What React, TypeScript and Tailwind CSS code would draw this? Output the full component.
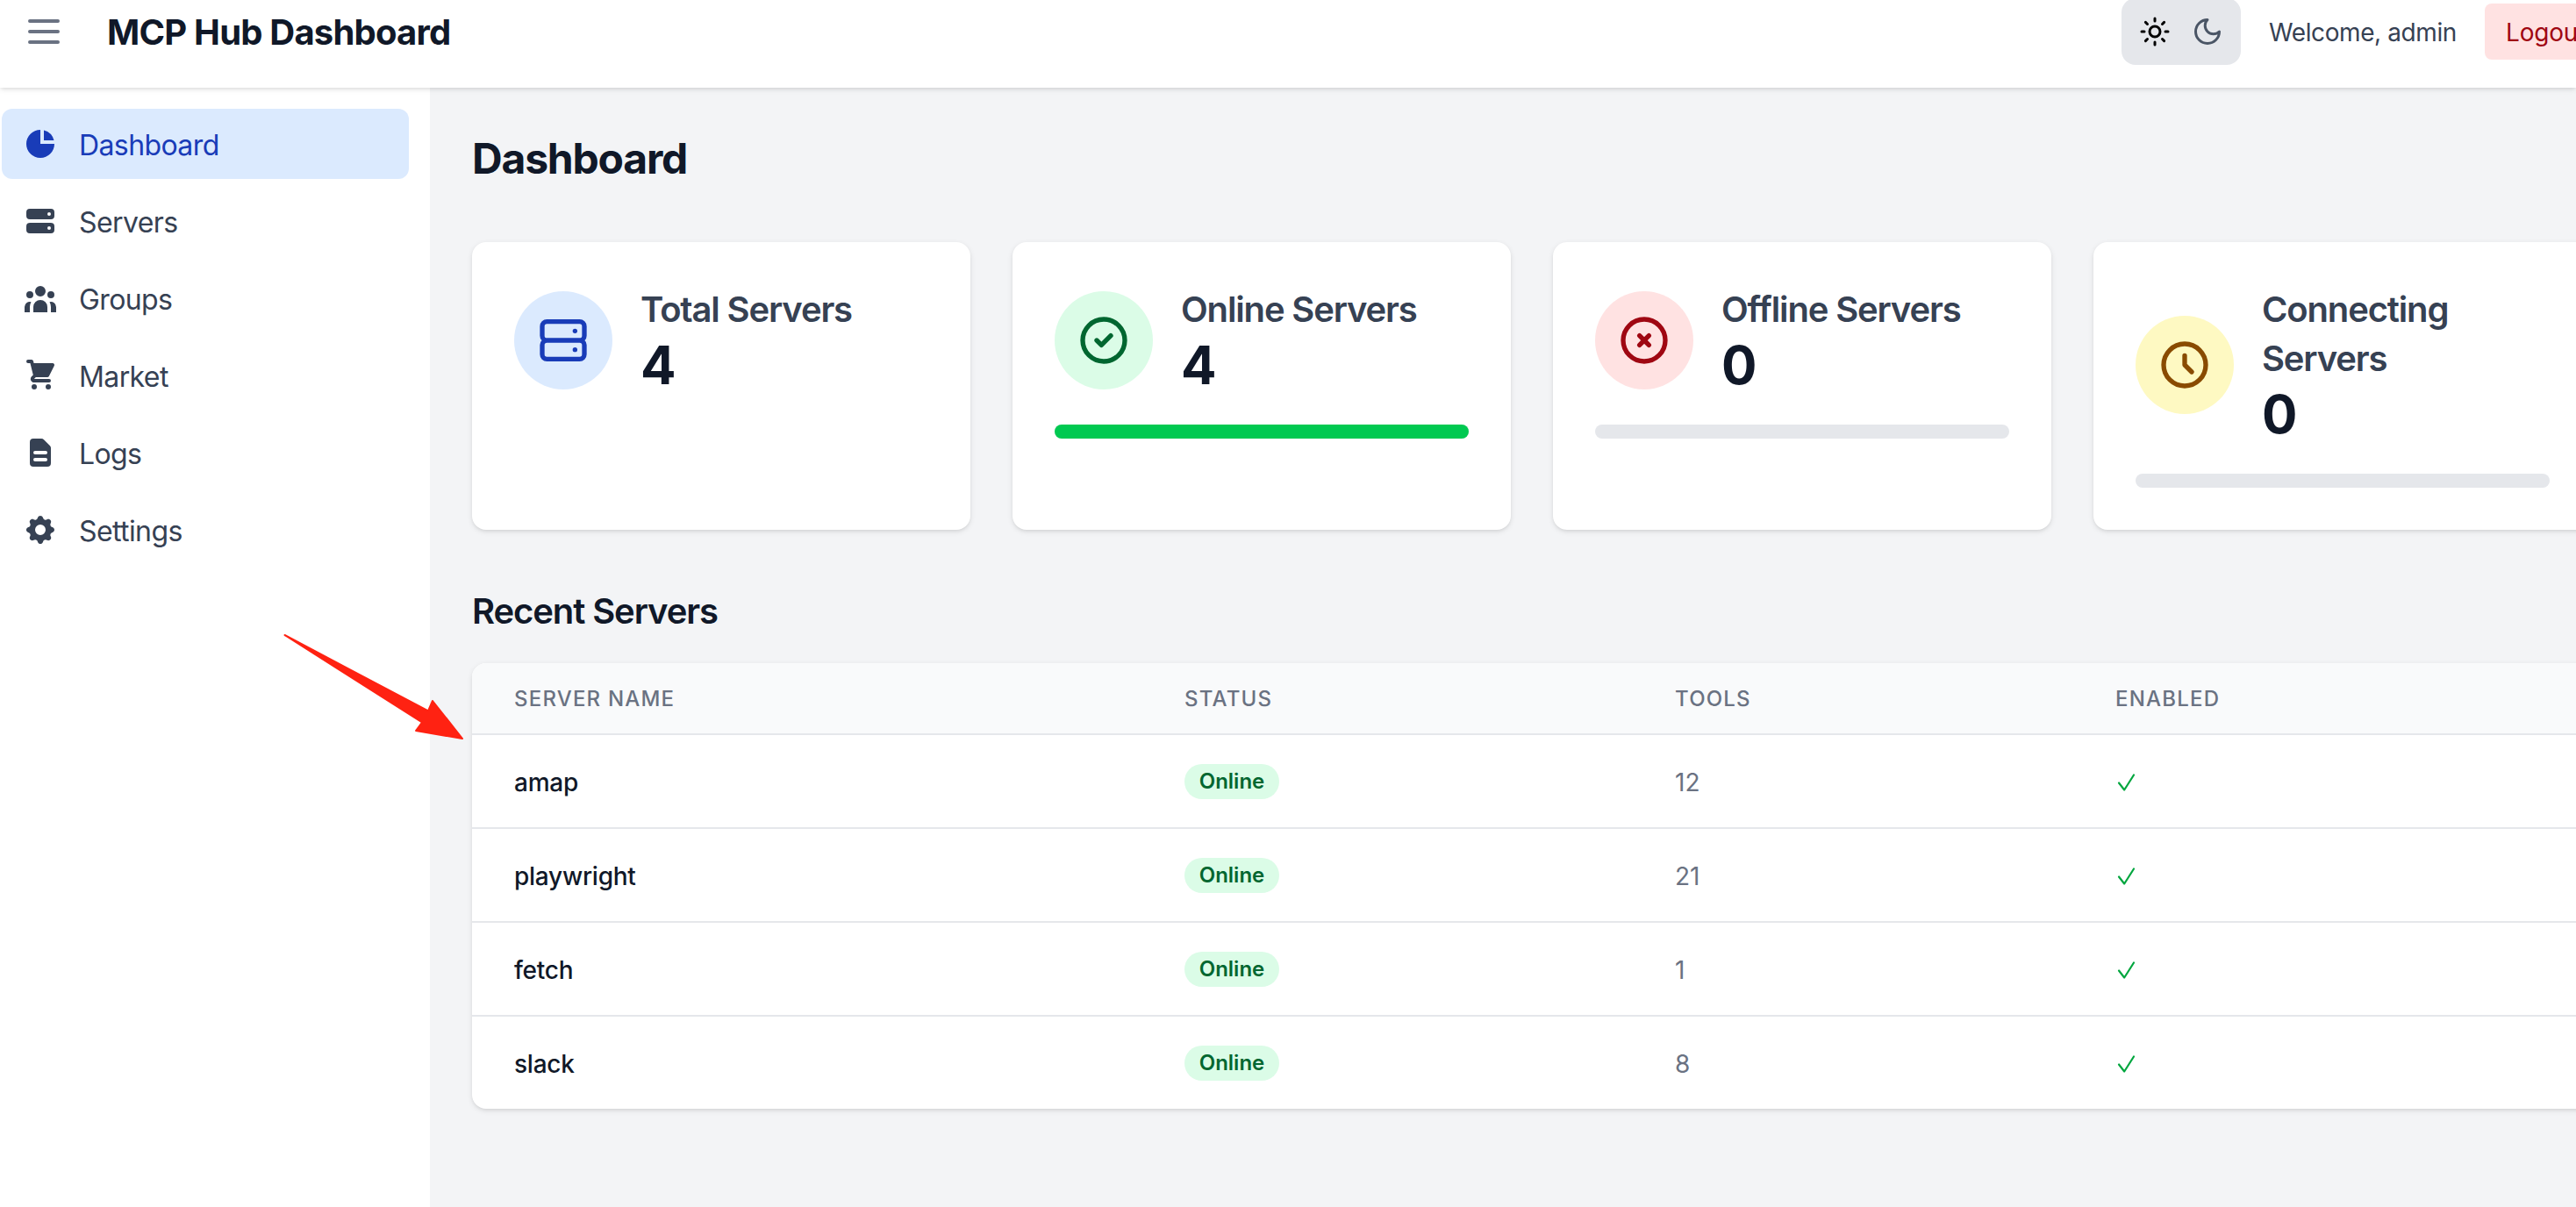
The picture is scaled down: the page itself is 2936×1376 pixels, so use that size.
import type { ReactNode } from "react";
import type { IconType } from "react-icons";
import {
  HiChartPie,
  HiServer,
  HiUserGroup,
  HiShoppingCart,
  HiDocumentText,
  HiCog,
  HiOutlineMenu,
  HiOutlineServer,
  HiOutlineCheckCircle,
  HiOutlineXCircle,
  HiOutlineClock,
} from "react-icons/hi";

interface NavItem {
  label: string;
  icon: IconType;
  active?: boolean;
}

interface Server {
  name: string;
  status: string;
  tools: number;
  enabled: boolean;
}

const navItems: NavItem[] = [
  { label: "Dashboard", icon: HiChartPie, active: true },
  { label: "Servers", icon: HiServer },
  { label: "Groups", icon: HiUserGroup },
  { label: "Market", icon: HiShoppingCart },
  { label: "Logs", icon: HiDocumentText },
  { label: "Settings", icon: HiCog },
];

const servers: Server[] = [
  { name: "amap", status: "Online", tools: 12, enabled: true },
  { name: "playwright", status: "Online", tools: 21, enabled: true },
  { name: "fetch", status: "Online", tools: 1, enabled: true },
  { name: "slack", status: "Online", tools: 8, enabled: true },
];

function SunIcon() {
  return (
    <svg
      viewBox="0 0 24 24"
      fill="none"
      stroke="currentColor"
      strokeWidth="2"
      strokeLinecap="round"
      strokeLinejoin="round"
      className="size-9"
    >
      <circle cx="12" cy="12" r="4" />
      <path d="M12 2v2M12 20v2M4.93 4.93l1.41 1.41M17.66 17.66l1.41 1.41M2 12h2M20 12h2M6.34 17.66l-1.41 1.41M19.07 4.93l-1.41 1.41" />
    </svg>
  );
}

function MoonIcon() {
  return (
    <svg
      viewBox="0 0 24 24"
      fill="none"
      stroke="currentColor"
      strokeWidth="2"
      strokeLinecap="round"
      strokeLinejoin="round"
      className="size-9"
    >
      <path d="M12 3a6 6 0 0 0 9 9 9 9 0 1 1-9-9Z" />
    </svg>
  );
}

function Header() {
  return (
    <header className="relative z-10 flex h-[100px] shrink-0 items-start justify-between bg-white shadow-[0_2px_6px_0_rgb(0_0_0/0.1),0_2px_4px_-2px_rgb(0_0_0/0.1)]">
      <div className="flex h-[72px] items-center pl-[26px]">
        <button type="button" className="text-gray-500">
          <HiOutlineMenu className="size-12" />
        </button>
        <h1 className="ml-12 pt-0.5 text-[40px] leading-[54px] font-bold tracking-[-0.8px] text-gray-900">
          MCP Hub Dashboard
        </h1>
      </div>

      {/* Logout runs past the right edge of the window */}
      <div className="-mt-0.5 flex h-[76px] w-[518px] shrink-0 items-center gap-8">
        <div className="flex shrink-0 rounded-2xl bg-gray-200 p-2">
          <button type="button" className="p-3 text-black">
            <SunIcon />
          </button>
          <button type="button" className="p-3 text-gray-600">
            <MoonIcon />
          </button>
        </div>
        <span className="w-[214px] shrink-0 pt-0.5 text-[28px] leading-[38px] tracking-[-0.4px] whitespace-nowrap text-gray-700">
          Welcome, admin
        </span>
        <button
          type="button"
          className="h-16 shrink-0 rounded-lg bg-red-100 px-6 pt-0.5 text-[28px] leading-10 tracking-[-0.2px] text-red-800"
        >
          Logout
        </button>
      </div>
    </header>
  );
}

function Sidebar() {
  return (
    <aside className="w-[490px] shrink-0 bg-white pt-6 pr-6 pl-0.5">
      <nav className="flex flex-col gap-2">
        {navItems.map(({ label, icon: Icon, active }) => (
          <a
            key={label}
            className={
              active
                ? "flex h-20 items-center rounded-xl bg-blue-100 px-6 text-blue-800"
                : "flex h-20 items-center rounded-xl px-6 text-gray-700"
            }
          >
            <Icon className="size-10" />
            <span className="ml-6 pt-[3px] text-[32px] leading-[45px] tracking-[-0.6px]">
              {label}
            </span>
          </a>
        ))}
      </nav>
    </aside>
  );
}

interface StatCardProps {
  title: string;
  value: number;
  icon: ReactNode;
  tone: string;
  percent?: number;
}

function StatCard({ title, value, icon, tone, percent }: StatCardProps) {
  return (
    <div className="rounded-2xl bg-white p-12 shadow-[0_2px_6px_0_rgb(0_0_0/0.1),0_2px_4px_-2px_rgb(0_0_0/0.1)]">
      <div className="flex items-center">
        <div className={`shrink-0 rounded-full p-6 ${tone}`}>{icon}</div>
        <div className="ml-8 pt-px">
          <h2 className="text-[40px] leading-[56px] font-semibold tracking-[-1.15px] text-gray-700">
            {title}
          </h2>
          <p className="text-[60px] leading-[71px] font-bold tracking-tight text-gray-900">
            {value}
          </p>
        </div>
      </div>
      {percent != null && (
        <div className="mt-8 h-4 rounded-full bg-gray-200">
          <div
            className="h-full rounded-full bg-green-500"
            style={{ width: `${percent}%` }}
          />
        </div>
      )}
    </div>
  );
}

function ServersTable() {
  return (
    <div className="overflow-hidden rounded-2xl bg-white shadow-[0_2px_6px_0_rgb(0_0_0/0.1),0_2px_4px_-2px_rgb(0_0_0/0.1)]">
      <table className="w-full table-fixed text-left">
        <thead className="bg-gray-50 text-2xl leading-8 tracking-[1.2px] text-gray-500 uppercase">
          <tr className="h-[81px]">
            <th className="w-[764px] px-12 pt-0.5 font-medium">Server Name</th>
            <th className="w-[559px] px-12 pt-0.5 font-medium">Status</th>
            <th className="w-[502px] px-12 pt-0.5 font-medium">Tools</th>
            <th className="px-12 pt-0.5 font-medium">Enabled</th>
          </tr>
        </thead>
        <tbody className="text-[28px] leading-10">
          {servers.map((s) => (
            <tr
              key={s.name}
              className="h-[107px] border-t-2 border-gray-200 last:h-[106px]"
            >
              <td className="px-12 pt-0.5 font-medium tracking-[-0.25px] text-gray-900">
                {s.name}
              </td>
              <td className="px-12">
                <span className="flex h-10 w-[108px] items-center justify-center rounded-full bg-green-100 pt-px text-2xl font-semibold text-green-800">
                  {s.status}
                </span>
              </td>
              <td className="px-12 pt-0.5 text-gray-500">{s.tools}</td>
              <td className="px-12 pt-0.5">
                {s.enabled && (
                  <svg
                    viewBox="0 0 24 24"
                    fill="none"
                    stroke="currentColor"
                    strokeWidth="2.2"
                    strokeLinecap="round"
                    strokeLinejoin="round"
                    className="size-6 text-green-600"
                  >
                    <path d="M4 12.5l6.2 8L21 3.5" />
                  </svg>
                )}
              </td>
            </tr>
          ))}
        </tbody>
      </table>
    </div>
  );
}

export default function App() {
  return (
    <div className="relative flex h-[1376px] w-[2936px] flex-col overflow-hidden bg-gray-100 font-['Inter','Liberation_Sans',sans-serif]">
      <Header />
      <div className="flex flex-1">
        <Sidebar />
        <main className="w-[2512px] shrink-0 p-12">
          <h1 className="mb-16 pt-0.5 text-[48px] leading-[62px] font-bold tracking-[-1.2px] text-gray-900">
            Dashboard
          </h1>

          <div className="grid grid-cols-4 gap-12">
            <StatCard
              title="Total Servers"
              value={4}
              tone="bg-blue-100 text-blue-800"
              icon={<HiOutlineServer className="size-16" />}
            />
            <StatCard
              title="Online Servers"
              value={4}
              tone="bg-green-100 text-green-800"
              icon={<HiOutlineCheckCircle className="size-16" />}
              percent={100}
            />
            <StatCard
              title="Offline Servers"
              value={0}
              tone="bg-red-100 text-red-800"
              icon={<HiOutlineXCircle className="size-16" />}
              percent={0}
            />
            <StatCard
              title="Connecting Servers"
              value={0}
              tone="bg-yellow-100 text-yellow-800"
              icon={<HiOutlineClock className="size-16" />}
              percent={0}
            />
          </div>

          <h2 className="mt-16 mb-8 pt-0.5 text-[40px] leading-[54px] font-semibold tracking-[-1.1px] text-gray-900">
            Recent Servers
          </h2>
          <ServersTable />
        </main>
      </div>

      {/* pointer arrow drawn over the page */}
      <svg
        viewBox="0 0 208 124"
        className="absolute top-[721px] left-[322px] h-[124px] w-[208px]"
      >
        <path
          d="M2.5 3 L166 89.5 L171 78 L205 121 L152 112 L159 102.5 Z"
          fill="#ff2212"
          stroke="#ff2212"
          strokeWidth="2"
          strokeLinejoin="round"
        />
      </svg>
    </div>
  );
}
